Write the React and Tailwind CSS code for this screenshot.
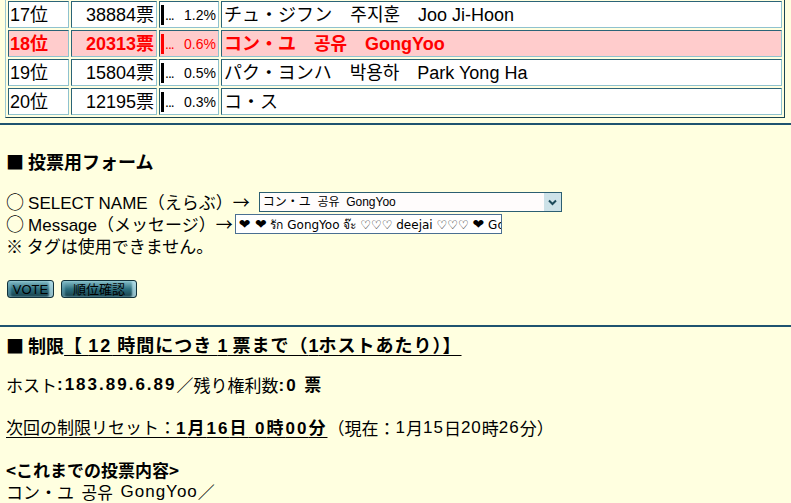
import React from "react";

const JP = '"Noto Sans CJK JP", "Noto Sans CJK KR", sans-serif';
const MIX = '"Liberation Sans", "Noto Sans CJK JP", "Noto Sans CJK KR", sans-serif';

function J({ children, className = "" }) {
  return <span className={className} style={{ fontFamily: JP }}>{children}</span>;
}

const rows = [
  { rank: "17位", votes: "38884票", pct: "1.2%", name: "チュ・ジフン\u3000주지훈\u3000Joo Ji-Hoon", hl: false },
  { rank: "18位", votes: "20313票", pct: "0.6%", name: "コン・ユ\u3000공유\u3000GongYoo", hl: true },
  { rank: "19位", votes: "15804票", pct: "0.5%", name: "パク・ヨンハ\u3000박용하\u3000Park Yong Ha", hl: false },
  { rank: "20位", votes: "12195票", pct: "0.3%", name: "コ・ス", hl: false },
];

const cell = "border-t border-l border-b border-r border-t-[#2b6478] border-l-[#2b6478] border-b-[#8fc2cf] border-r-[#8fc2cf] p-0 h-[27px] align-middle";

function Btn({ children, w }) {
  return (
    <button
      className={`h-[18px] ${w} rounded-[3px] border border-[#12323c] text-[13px] leading-none text-black bg-gradient-to-b from-[#86bfca] via-[#2c6f7f] to-[#173f4a] shadow-[inset_-4px_0_2px_rgba(190,230,240,0.75),inset_3px_0_2px_rgba(120,180,195,0.5)]`}
      style={{ fontFamily: '"Liberation Sans", "Noto Sans CJK JP", sans-serif' }}
    >
      {children}
    </button>
  );
}

const line = "h-[22px] flex items-center whitespace-nowrap";

export default function App() {
  return (
    <div
      className="h-[503px] w-[791px] bg-[#ffffe0] text-black overflow-hidden text-[17px]"
      style={{ fontFamily: MIX }}
    >
      <div className="px-[5px]">
        <table className="-mt-[2px] w-[780px] border-separate border-spacing-[2px] border border-t-[#9cc8d2] border-l-[#9cc8d2] border-r-[#1a4452] border-b-[#1a4452] table-fixed">
          <colgroup>
            <col className="w-[61px]" />
            <col className="w-[86px]" />
            <col className="w-[60px]" />
            <col />
          </colgroup>
          <tbody>
            {rows.map((r) => {
              const bg = r.hl ? "bg-[#ffcccc] text-[#ff0000]" : "bg-white";
              return (
                <tr key={r.rank} className={`${bg} leading-[20px]`}>
                  <td className={`${cell} pl-[1px] ${r.hl ? "font-bold" : ""} text-[18px]`}>{r.rank}</td>
                  <td className={`${cell} text-right pr-[2px] text-[18px] ${r.hl ? "font-bold" : ""}`}>{r.votes}</td>
                  <td className={`${cell}`}>
                    <div className="flex items-center">
                      <span className={`ml-[1px] inline-block w-[3px] h-[20px] ${r.hl ? "bg-[#ff0000]" : "bg-black"}`} />
                      <span className="text-[14px] ml-[1px] tracking-[-1px]">...</span>
                      <span className="ml-auto mr-[2px] text-[14px]">{r.pct}</span>
                    </div>
                  </td>
                  <td className={`${cell} pl-[2px] text-[18px] whitespace-nowrap ${r.hl ? "font-bold" : ""}`}>{r.name}</td>
                </tr>
              );
            })}
          </tbody>
        </table>
      </div>

      <div className="mt-[5px] h-[2px] bg-[#1f5370]" />

      <div className="px-[6px]">
        <div className={`mt-[25px] font-bold text-[18px] ${line}`}><J>■ 投票用フォーム</J></div>

        <div className="mt-[19px]">
          <div className={line}>
            <span><J className="text-[18px]">○ </J>SELECT NAME<J>（えらぶ）→</J></span>
            <div className="ml-[9px] w-[303px] h-[20px] border border-[#2c5f72] bg-[#fffcfc] flex items-stretch">
              <span className="flex-1 pl-[3px] text-[12px] leading-[18px] whitespace-nowrap">コン・ユ&nbsp;&nbsp;공유&nbsp;&nbsp;GongYoo</span>
              <span className="w-[17px] bg-[#cde2e8] flex items-center justify-center">
                <svg width="9" height="7" viewBox="0 0 9 7"><path d="M1 1.5 L4.5 5 L8 1.5" stroke="#1c4a5a" strokeWidth="2" fill="none" /></svg>
              </span>
            </div>
          </div>
          <div className={line}>
            <span><J className="text-[18px]">○ </J>Message<J>（メッセージ）→</J></span>
            <div className="ml-[2px] w-[267px] h-[20px] border border-[#4a6f92] bg-white pl-[3px] text-[12px] leading-[18px] whitespace-nowrap overflow-hidden" style={{ fontFamily: '"DejaVu Sans", "Noto Sans", sans-serif' }}>
              <span className="text-[14px]">❤ ❤</span> รัก GongYoo จ๊ะ ♡♡♡ deejai ♡♡♡ <span className="text-[14px]">❤</span> GongYoo
            </div>
          </div>
          <div className={line}><J>※ タグは使用できません。</J></div>
        </div>

        <div className="mt-[23px] flex gap-[7px] pl-[1px]">
          <Btn w="w-[47px]">VOTE</Btn>
          <Btn w="w-[76px]">順位確認</Btn>
        </div>
      </div>

      <div className="mt-[27px] h-[2px] bg-[#1f5370]" />

      <div className="px-[6px]">
        <div className={`mt-[7px] font-bold text-[18px] ${line}`}>
          <J>■ 制限</J><span className="underline underline-offset-[3px]"><J className="tracking-[1px]">【 </J><span className="tracking-[2px]">12</span><J className="tracking-[1px]"> 時間につき </J>1<J className="tracking-[1px]"> 票まで（</J>1<J className="tracking-[1px]">ホストあたり）】</J></span>
        </div>
        <div className={`mt-[18px] ${line}`}>
          <J>ホスト</J><b className="tracking-[2px]">:183.89.6.89</b><J>／残り権利数</J><b className="tracking-[2px]">:0 <J>票</J></b>
        </div>
        <div className={`mt-[21px] ${line}`}>
          <span className="underline underline-offset-[3px]"><J>次回の制限リセット：</J><b className="tracking-[2px]">1<J>月</J>16<J>日</J> 0<J>時</J>00<J>分</J></b></span><J>（現在：</J><span className="tracking-[1px]">1</span><J>月</J><span className="tracking-[1px]">15</span><J>日 </J><span className="tracking-[1px]">20</span><J>時</J><span className="tracking-[1px]">26</span><J>分）</J>
        </div>
        <div className={`mt-[20px] font-bold ${line}`}><J>&lt;これまでの投票内容&gt;</J></div>
        <div className={line}><J>コン・ユ&nbsp;&nbsp;공유&nbsp;&nbsp;</J><span className="tracking-[1px]">GongYoo</span><J>／</J></div>
      </div>
    </div>
  );
}
